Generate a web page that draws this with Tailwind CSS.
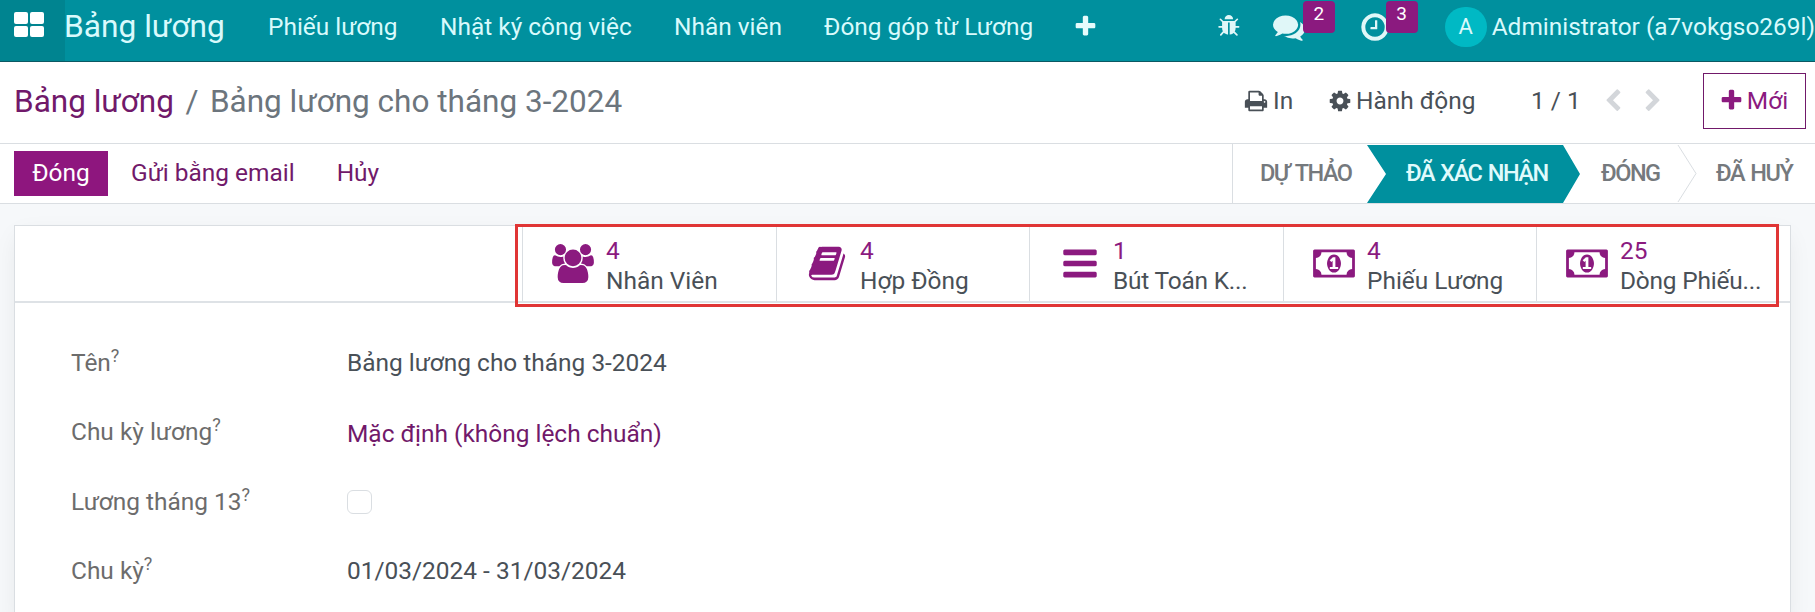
<!DOCTYPE html>
<html lang="vi">
<head>
  <meta charset="UTF-8">
  <title>Bảng lương cho tháng 3-2024</title>
  <script src="https://cdn.jsdelivr.net/npm/@tailwindcss/browser@4"></script>
</head>
<body class="w-[1815px] h-[612px] overflow-hidden bg-[#f6f8fa] font-['Roboto','Noto_Sans',sans-serif] text-[24.45px] leading-[30px] text-[#495057]">

  <!-- Icon dùng chung -->
  <svg class="hidden">
    <symbol id="plus" viewBox="0 0 1792 1792"><path d="M1600 736v192q0 40-28 68t-68 28h-416v416q0 40-28 68t-68 28h-192q-40 0-68-28t-28-68v-416h-416q-40 0-68-28t-28-68v-192q0-40 28-68t68-28h416v-416q0-40 28-68t68-28h192q40 0 68 28t28 68v416h416q40 0 68 28t28 68z"/></symbol>
    <symbol id="money" viewBox="0 0 1920 1792"><path d="M768 1152h384v-96h-128v-448h-114l-148 137 77 80q42-37 55-57h2v288h-128v96zm512-256q0 70-21 142t-59.5 134-101.5 101-138 39-138-39-101.5-101-59.5-134-21-142 21-142 59.5-134 101.5-101 138-39 138 39 101.5 101 59.5 134 21 142zm512 256v-512q-106 0-181-75t-75-181h-1152q0 106-75 181t-181 75v512q106 0 181 75t75 181h1152q0-106 75-181t181-75zm128-832v1152q0 26-19 45t-45 19h-1792q-26 0-45-19t-19-45v-1152q0-26 19-45t45-19h1792q26 0 45 19t19 45z"/></symbol>
  </svg>

  <!-- Thanh điều hướng -->
  <header class="flex h-[62px] bg-[#00909e] border-b border-[#0b5963] text-[#d9fafc] whitespace-nowrap">
    <div class="w-[65px] shrink-0 bg-[#008490] pl-3.5 pt-3">
      <div class="grid grid-cols-2 gap-[2px] w-[30px] h-[25px]">
        <span class="bg-white rounded-[2px]"></span>
        <span class="bg-white rounded-[2px]"></span>
        <span class="bg-white rounded-[2px]"></span>
        <span class="bg-white rounded-[2px]"></span>
      </div>
    </div>
    <div class="flex items-center h-[54px] grow">
      <div class="w-[203px] -indent-px text-[31.7px]">Bảng lương</div>
      <nav class="flex items-center">
        <a class="w-[172px]">Phiếu lương</a>
        <a class="w-[234px]">Nhật ký công việc</a>
        <a class="w-[150px]">Nhân viên</a>
        <a class="w-[249px]">Đóng góp từ Lương</a>
        <svg class="w-[25px] h-[25px] mb-0.5 fill-[#e6fbfc]"><use href="#plus"/></svg>
      </nav>
    </div>
    <div class="flex items-center h-[54px] w-[598px] shrink-0 fill-[#e0f7f8]">
      <svg class="w-6 h-6 mb-0.5" viewBox="0 0 1792 1792"><path d="M1696 960q0 26-19 45t-45 19h-224q0 171-67 290l208 209q19 19 19 45t-19 45q-18 19-45 19t-45-19l-198-197q-5 5-15 13t-42 28.5-65 36.5-82 29-97 13v-896h-128v896q-51 0-101.5-13.5t-87-33-66-39-43.5-32.5l-15-14-183 207q-20 21-48 21-24 0-43-16-19-18-20.5-44.5t15.5-46.5l202-227q-58-114-58-274h-224q-26 0-45-19t-19-45 19-45 45-19h224v-294l-173-173q-19-19-19-45t19-45 45-19 45 19l173 173h844l173-173q19-19 45-19t45 19 19 45-19 45l-173 173v294h224q26 0 45 19t19 45zm-480-576h-640q0-133 93.5-226.5t226.5-93.5 226.5 93.5 93.5 226.5z"/></svg>
      <div class="relative ml-8 w-[85px] h-8">
        <svg class="w-8 h-8" viewBox="0 0 1792 1792"><path d="M1408 768q0 139-94 257t-256.5 186.5-353.5 68.5q-86 0-176-16-124 88-278 128-36 9-86 16h-3q-11 0-20.5-8t-11.5-21q-1-3-1-6.5t.5-6.5 2-6l2.5-5 3.5-5.5 4-5 4.5-5 4-4.5q5-6 23-25t26-29.5 22.5-29 25-38.5 20.5-44q-124-72-195-177t-71-224q0-139 94-257t256.5-186.5 353.5-68.5 353.5 68.5 256.5 186.5 94 257zm384 256q0 120-71 224.5t-195 176.5q10 24 20.5 44t25 38.5 22.5 29 26 29.5 23 25q1 1 4 4.5t4.5 5 4 5 3.5 5.5l2.5 5 2 6 .5 6.5-1 6.5q-3 14-13 22t-22 7q-50-7-86-16-154-40-278-128-90 16-176 16-271 0-472-132 58 4 88 4 161 0 309-45t264-129q125-92 192-212t67-254q0-77-23-152 129 71 204 178t75 230z"/></svg>
        <span class="absolute left-[30px] -top-[10px] w-8 h-8 rounded-[4px] bg-[#8b1a7f] text-white text-[19px] leading-[26px] text-center">2</span>
      </div>
      <div class="relative ml-0.5 w-[87px] h-8">
        <svg class="w-8 h-8" viewBox="0 0 1792 1792"><path d="M1024 544v448q0 14-9 23t-23 9h-320q-14 0-23-9t-9-23v-64q0-14 9-23t23-9h224v-352q0-14 9-23t23-9h64q14 0 23 9t9 23zm416 352q0-148-73-273t-198-198-273-73-273 73-198 198-73 273 73 273 198 198 273 73 273-73 198-198 73-273zm224 0q0 209-103 385.5t-279.5 279.5-385.5 103-385.5-103-279.5-279.5-103-385.5 103-385.5 279.5-279.5 385.5-103 385.5 103 279.5 279.5 103 385.5z"/></svg>
        <span class="absolute left-[27px] -top-[10px] w-8 h-8 rounded-[4px] bg-[#8b1a7f] text-white text-[19px] leading-[26px] text-center">3</span>
      </div>
      <span class="w-[42px] h-10 shrink-0 rounded-full bg-[#00b9c4] text-center text-[22px] leading-10">A</span>
      <span class="ml-[5px]">Administrator (a7vokgso269l)</span>
    </div>
  </header>

  <!-- Breadcrumb và thao tác -->
  <section class="flex items-center justify-between h-[82px] bg-white border-b border-[#dadee2] pl-3.5 pr-[9px] pb-[2px] whitespace-nowrap">
    <div class="flex text-[31.5px] gap-[11.5px] text-[#6c757d] pt-px">
      <a class="text-[#71196a]">Bảng lương</a>
      <span>/</span>
      <span>Bảng lương cho tháng 3-2024</span>
    </div>
    <div class="flex items-center w-[561px] pb-[2px]">
      <div class="flex items-center w-[84px]">
        <svg class="w-6 h-6 mr-[5px] -ml-px fill-[#495057]" viewBox="0 0 1792 1792"><path d="M448 1536h896v-256h-896v256zm0-640h896v-384h-160q-40 0-68-28t-28-68v-160h-640v640zm1152 64q0-26-19-45t-45-19-45 19-19 45 19 45 45 19 45-19 19-45zm128 0v416q0 13-9.5 22.5t-22.5 9.5h-224v160q0 40-28 68t-68 28h-960q-40 0-68-28t-28-68v-160h-224q-13 0-22.5-9.5t-9.5-22.5v-416q0-79 56.5-135.5t135.5-56.5h64v-544q0-40 28-68t68-28h672q40 0 88 20t76 48l152 152q28 28 48 76t20 88v256h64q79 0 135.5 56.5t56.5 135.5z"/></svg>
        In
      </div>
      <div class="flex items-center w-[202px]">
        <svg class="w-6 h-6 mr-1 -ml-px fill-[#495057]" viewBox="0 0 1792 1792"><path d="M1152 896q0-106-75-181t-181-75-181 75-75 181 75 181 181 75 181-75 75-181zm512-109v222q0 12-8 23t-20 13l-185 28q-19 54-39 91 35 50 107 138 10 12 10 25t-9 23q-27 37-99 108t-94 71q-12 0-26-9l-138-108q-44 23-91 38-16 136-29 186-7 28-36 28h-222q-14 0-24.5-8.5t-11.5-21.5l-28-184q-49-16-90-37l-141 107q-10 9-25 9-14 0-25-11-126-114-165-168-7-10-7-23 0-12 8-23 15-21 51-66.5t54-70.5q-27-50-41-99l-183-27q-13-2-21-12.5t-8-23.5v-222q0-12 8-23t19-13l186-28q14-46 39-92-40-57-107-138-10-12-10-24 0-10 9-23 26-36 98.5-107.5t94.5-71.5q13 0 26 10l138 107q44-23 91-38 16-136 29-186 7-28 36-28h222q14 0 24.5 8.5t11.5 21.5l28 184q49 16 90 37l142-107q9-9 24-9 13 0 25 10 129 119 165 170 7 8 7 22 0 12-8 23-15 21-51 66.5t-54 70.5q26 50 41 98l183 28q13 2 21 12.5t8 23.5z"/></svg>
        Hành động
      </div>
      <span class="w-[70px]">1 / 1</span>
      <svg class="w-6 h-6 mr-4 fill-[#d3d6da]" viewBox="0 0 1792 1792"><path d="M1427 301l-531 531 531 531q19 19 19 45t-19 45l-166 166q-19 19-45 19t-45-19l-742-742q-19-19-19-45t19-45l742-742q19-19 45-19t45 19l166 166q19 19 19 45t-19 45z"/></svg>
      <svg class="w-6 h-6 fill-[#d3d6da]" viewBox="0 0 1792 1792"><path d="M1363 877l-742 742q-19 19-45 19t-45-19l-166-166q-19-19-19-45t19-45l531-531-531-531q-19-19-19-45t19-45l166-166q19-19 45-19t45 19l742 742q19 19 19 45t-19 45z"/></svg>
      <button class="ml-auto flex items-center justify-center w-[103px] h-14 pr-0.5 border border-[#71196a] text-[#8b1a7f] fill-[#8b1a7f]">
        <svg class="w-[25px] h-[25px] mr-[3px]"><use href="#plus"/></svg>
        Mới
      </button>
    </div>
  </section>

  <!-- Nút và trạng thái -->
  <section class="flex items-center justify-between h-[60px] bg-white border-b border-[#dadee2] pl-3.5 whitespace-nowrap text-[#71196a]">
    <div class="flex items-center leading-[28px]">
      <button class="w-[94px] h-[45px] pb-[2px] bg-[#8e167e] text-white">Đóng</button>
      <button class="ml-[23px] pb-[2px]">Gửi bằng email</button>
      <button class="ml-[42px] pb-[2px]">Hủy</button>
    </div>
    <div class="flex h-[59px] w-[583px] border-l border-[#dadee2] font-medium text-[23.5px] tracking-[-1.5px] [word-spacing:2px] leading-[58px] text-[#75797d]">
      <span class="w-[134px] pl-[27px]">DỰ THẢO</span>
      <span class="w-[213px] mt-px h-[58px] leading-[56px] pl-[39px] bg-[#00909e] text-[#e0fbfc] [clip-path:polygon(0_0,196px_0,100%_50%,196px_100%,0_100%,19px_50%)]">ĐÃ XÁC NHẬN</span>
      <span class="w-[97px] pl-[21px]">ĐÓNG</span>
      <svg class="w-5 h-[59px] fill-none stroke-[#dadee2]" viewBox="0 0 20 59"><path d="M1 1l18 28.5L1 58"/></svg>
      <span class="pl-[19px]">ĐÃ HUỶ</span>
    </div>
  </section>

  <!-- Phiếu -->
  <main class="relative mt-[21px] ml-3.5 w-[1777px] h-[400px] bg-white border border-[#dadee2] shadow-[0_8px_24px_-4px_rgba(0,0,0,0.08)]">
    <div class="flex justify-end h-[77px] border-b-2 border-[#dee2e6] pr-[1px] whitespace-nowrap">
      <div class="flex w-[254px] border-l border-[#dadee2] pt-[10px]">
        <svg class="w-[42px] h-[39px] ml-[29px] mr-3 mt-[8px] fill-[#8b1a7f]" viewBox="0 0 1920 1792"><path d="M593 896q-162 5-265 128h-134q-82 0-138-40.5t-56-118.5q0-353 124-353 6 0 43.5 21t97.5 42.5 119 21.5q67 0 133-23-5 37-5 66 0 139 81 256zm1071 637q0 120-73 189.5t-194 69.5h-874q-121 0-194-69.5t-73-189.5q0-53 3.5-103.5t14-109 26.5-108.5 43-97.5 62-81 85.5-53.5 111.5-20q10 0 43 21.5t73 48 107 48 135 21.5 135-21.5 107-48 73-48 43-21.5q61 0 111.5 20t85.5 53.5 62 81 43 97.5 26.5 108.5 14 109 3.5 103.5zm-1024-1277q0 106-75 181t-181 75-181-75-75-181 75-181 181-75 181 75 75 181zm704 384q0 159-112.5 271.5t-271.5 112.5-271.5-112.5-112.5-271.5 112.5-271.5 271.5-112.5 271.5 112.5 112.5 271.5zm576 225q0 78-56 118.5t-138 40.5h-134q-103-123-265-128 81-117 81-256 0-29-5-66 66 23 133 23 59 0 119-21.5t97.5-42.5 43.5-21q124 0 124 353zm-128-609q0 106-75 181t-181 75-181-75-75-181 75-181 181-75 181 75 75 181z"/></svg>
        <div><div class="text-[#8b1a7f]">4</div><div>Nhân Viên</div></div>
      </div>
      <div class="flex w-[253px] border-l border-[#dadee2] pt-[10px]">
        <svg class="w-[42px] h-[39px] ml-[29px] mr-3 mt-[8px] fill-[#8b1a7f]" viewBox="0 0 1792 1792"><path d="M1703 478q40 57 18 129l-275 906q-19 64-76.5 107.5t-122.5 43.5h-923q-77 0-148.5-53.5t-99.5-131.5q-24-67-2-127 0-4 3-27t4-37q1-8-3-21.5t-3-19.5q2-11 8-21t16.5-23.5 16.5-23.5q23-38 45-91.5t30-91.5q3-10 .5-30t-.5-28q3-11 17-28t17-23q21-36 42-92t25-90q1-9-2.5-32t.5-28q4-13 22-30.5t22-22.5q19-26 42.5-84.5t27.5-96.5q1-8-3-25.5t-2-26.5q2-8 9-18t18-23 17-21q8-12 16.5-30.5t15-35 16-36 19.5-32 26.5-23.5 36-11.5 47.5 5.5l-1 3q38-9 51-9h761q74 0 114 56t18 130l-274 906q-36 119-71.5 153.5t-128.5 34.5h-869q-27 0-38 15-11 16-1 43 24 70 144 70h923q29 0 56-15.5t35-41.5l300-987q7-22 5-57 38 15 59 43zm-1064 2q-4 13 2 22.5t20 9.5h608q13 0 25.5-9.5t16.5-22.5l21-64q4-13-2-22.5t-20-9.5h-608q-13 0-25.5 9.5t-16.5 22.5zm-83 256q-4 13 2 22.5t20 9.5h608q13 0 25.5-9.5t16.5-22.5l21-64q4-13-2-22.5t-20-9.5h-608q-13 0-25.5 9.5t-16.5 22.5z"/></svg>
        <div><div class="text-[#8b1a7f]">4</div><div>Hợp Đồng</div></div>
      </div>
      <div class="flex w-[254px] border-l border-[#dadee2] pt-[10px]">
        <svg class="w-[42px] h-[39px] ml-[29px] mr-3 mt-[8px] fill-[#8b1a7f]" viewBox="0 0 1792 1792"><path d="M1664 1344v128q0 26-19 45t-45 19h-1408q-26 0-45-19t-19-45v-128q0-26 19-45t45-19h1408q26 0 45 19t19 45zm0-512v128q0 26-19 45t-45 19h-1408q-26 0-45-19t-19-45v-128q0-26 19-45t45-19h1408q26 0 45 19t19 45zm0-512v128q0 26-19 45t-45 19h-1408q-26 0-45-19t-19-45v-128q0-26 19-45t45-19h1408q26 0 45 19t19 45z"/></svg>
        <div><div class="text-[#8b1a7f]">1</div><div class="tracking-[-0.2px]">Bút Toán K...</div></div>
      </div>
      <div class="flex w-[253px] border-l border-[#dadee2] pt-[10px]">
        <svg class="w-[42px] h-[39px] ml-[29px] mr-3 mt-[8px] fill-[#8b1a7f]"><use href="#money"/></svg>
        <div><div class="text-[#8b1a7f]">4</div><div>Phiếu Lương</div></div>
      </div>
      <div class="flex w-[253px] border-l border-[#dadee2] pt-[10px]">
        <svg class="w-[42px] h-[39px] ml-[29px] mr-3 mt-[8px] fill-[#8b1a7f]"><use href="#money"/></svg>
        <div><div class="text-[#8b1a7f]">25</div><div class="tracking-[-0.2px]">Dòng Phiếu...</div></div>
      </div>
    </div>

    <!-- Khung đỏ đánh dấu -->
    <div class="absolute left-[500px] -top-[2px] w-[1264px] h-[83px] border-3 border-[#e03535]"></div>

    <div class="grid grid-cols-[276px_1fr] auto-rows-[69.3px] pl-[56px] pt-[45px]">
      <label class="text-[#6c6c6c]">Tên<sup class="text-[18px] leading-none -top-[9px]">?</sup></label>
      <span>Bảng lương cho tháng 3-2024</span>
      <label class="text-[#6c6c6c]">Chu kỳ lương<sup class="text-[18px] leading-none -top-[9px]">?</sup></label>
      <a class="pt-[2px] text-[#71196a]">Mặc định (không lệch chuẩn)</a>
      <label class="text-[#6c6c6c]">Lương tháng 13<sup class="text-[18px] leading-none -top-[9px]">?</sup></label>
      <span class="mt-[3px] w-[25px] h-6 border border-[#dadee2] rounded-[6px]"></span>
      <label class="text-[#6c6c6c]">Chu kỳ<sup class="text-[18px] leading-none -top-[9px]">?</sup></label>
      <span>01/03/2024 - 31/03/2024</span>
    </div>
  </main>
</body>
</html>
